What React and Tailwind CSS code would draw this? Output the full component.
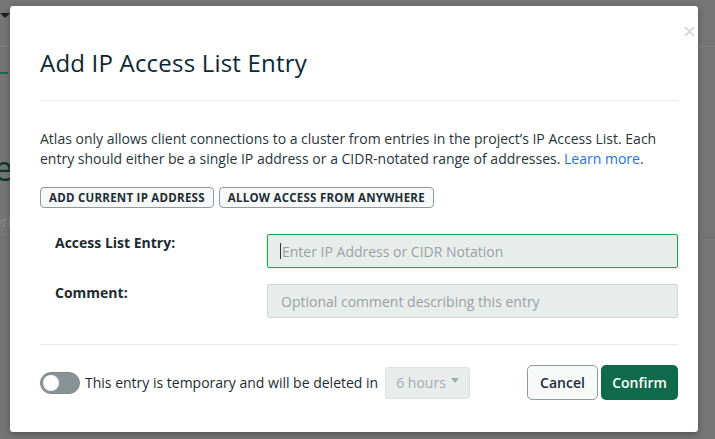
import React from "react";

export default function App() {
  const font = { fontFamily: "'Open Sans', 'Noto Sans', sans-serif" };
  return (
    <div className="relative w-[715px] h-[439px] overflow-hidden bg-[#757575]" style={font}>
      {/* background page fragments under the overlay */}
      <div className="absolute left-0 top-[13px] w-0 h-0 border-l-[5px] border-r-[5px] border-t-[5px] border-l-transparent border-r-transparent border-t-[#1f1f1f]" />
      <div className="absolute left-0 top-[46px] w-full h-px bg-[#828282]" />
      <div className="absolute left-0 top-[72px] w-[8px] h-[2px] bg-[#1d6b48]" />
      <div className="absolute left-[-6px] top-[148px] text-[34px] leading-[40px] text-[#0d3a2a]">e</div>
      <div className="absolute left-[-6px] top-[213px] text-[14px] leading-[18px] text-[#8a8a8a]">eri</div>
      <div className="absolute left-0 top-[237px] w-full h-px bg-[#6e6e6e]" />

      {/* modal */}
      <div className="absolute left-[10px] top-[6px] w-[688px] h-[426px] bg-white rounded-[3px] shadow-[0_2px_6px_rgba(0,0,0,0.3)] pl-[30px] pr-[20px] pt-[42px]">
        <button className="absolute right-[2px] top-[18px] w-[14px] h-[14px] flex items-center justify-center">
          <svg width="11" height="11" viewBox="0 0 11 11">
            <path d="M1 1L10 10M10 1L1 10" stroke="#d3d3d3" strokeWidth="1.6" />
          </svg>
        </button>

        <h1 className="text-[24px] leading-[30px] text-[#0b2733] font-normal tracking-[0.2px]">Add IP Access List Entry</h1>
        <div className="mt-[22px] h-px bg-[#e8e8e8]" />

        <p className="mt-[28px] text-[14px] leading-[20px] text-[#27353c]">
          Atlas only allows client connections to a cluster from entries in the project’s IP Access List. Each
          <br />
          entry should either be a single IP address or a CIDR-notated range of addresses.{" "}
          <span className="text-[#1a73e8]">Learn more</span>.
        </p>

        <div className="mt-[18px] flex gap-[5px]">
          <button className="h-[21px] px-[8px] rounded-[4px] border border-[#8f9a9f] bg-[#f7f9f9] text-[11.5px] font-bold text-[#1e2d35] tracking-[0.25px]">
            ADD CURRENT IP ADDRESS
          </button>
          <button className="h-[21px] px-[8px] rounded-[4px] border border-[#8f9a9f] bg-[#f7f9f9] text-[11.5px] font-bold text-[#1e2d35] tracking-[0.25px]">
            ALLOW ACCESS FROM ANYWHERE
          </button>
        </div>

        <div className="mt-[26px] flex">
          <label className="pl-[15px] w-[227px] text-[14px] leading-[18px] font-bold text-[#1c2b33]">Access List Entry:</label>
          <div className="flex-1 h-[34px] bg-[#e8edeb] border border-[#13aa52] rounded-[2px] flex items-center px-[12px] shadow-[0_0_3px_rgba(19,170,82,0.25)]">
            <span className="w-px h-[16px] bg-[#333] mr-[1px]" />
            <span className="text-[14px] text-[#9aa0a3]">Enter IP Address or CIDR Notation</span>
          </div>
        </div>

        <div className="mt-[16px] flex">
          <label className="pl-[15px] w-[227px] text-[14px] leading-[18px] font-bold text-[#1c2b33]">Comment:</label>
          <div className="flex-1 h-[34px] bg-[#e8edeb] border border-[#cfd5d3] rounded-[2px] flex items-center px-[13px]">
            <span className="text-[14px] text-[#9aa0a3]">Optional comment describing this entry</span>
          </div>
        </div>

        <div className="mt-[26px] h-px bg-[#e8e8e8]" />

        <div className="mt-[20px] flex items-center">
          <div className="w-[40px] h-[22px] rounded-full bg-[#889397] border border-[#7f8a8e] relative">
            <div className="absolute left-[2px] top-[2px] w-[16px] h-[16px] rounded-full bg-white" />
          </div>
          <span className="ml-[5px] text-[14px] text-[#1c2b33]">This entry is temporary and will be deleted in</span>
          <div className="ml-[7px] w-[85px] h-[32px] bg-[#e8edeb] border border-[#dde3e1] rounded-[3px] relative flex items-center pl-[10px]">
            <span className="text-[14px] text-[#a3abae]">6 hours</span>
            <div className="absolute right-[10px] top-[10px] w-0 h-0 border-l-[4px] border-r-[4px] border-t-[5px] border-l-transparent border-r-transparent border-t-[#a3abae]" />
          </div>
          <div className="flex-1" />
          <button className="w-[71px] h-[35px] rounded-[5px] border border-[#8f9a9f] bg-[#f7f9f9] text-[14px] font-semibold text-[#1c2b33]">Cancel</button>
          <button className="ml-[3px] w-[77px] h-[35px] rounded-[5px] bg-[#0e6a4b] text-[14px] font-semibold text-white">Confirm</button>
        </div>
      </div>
    </div>
  );
}
